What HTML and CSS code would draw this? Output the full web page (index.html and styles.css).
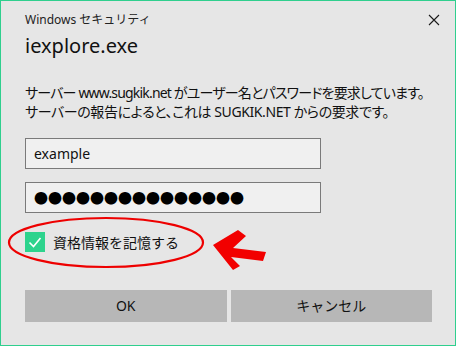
FILE: index.html
```html
<!DOCTYPE html>
<html lang="ja">
<head>
    <meta charset="UTF-8">
    <title>Windows セキュリティ</title>
    <link rel="stylesheet" href="styles.css">
</head>
<body>
    <div class="dialog">
        <div class="titlebar">
            <span class="title">Windows セキュリティ</span>
            <svg class="close" width="12" height="12" viewBox="0 0 12 12">
                <path d="M1 1 L11 11 M11 1 L1 11" stroke="#1a1a1a" stroke-width="1.1" fill="none"/>
            </svg>
        </div>
        <h1 class="app-name">iexplore.exe</h1>
        <p class="message">
            <span class="line tight">サーバー www.sugkik.net がユーザー名とパスワードを要求しています。</span>
            <span class="line">サーバーの報告によると、これは SUGKIK.NET からの要求です。</span>
        </p>

        <div class="field">example</div>
        <div class="field secret">●●●●●●●●●●●●●●●</div>

        <div class="remember">
            <span class="checkbox">
                <svg width="20" height="20" viewBox="0 0 20 20">
                    <path d="M4.5 10.5 L8.5 14.5 L15.5 6" stroke="#fff" stroke-width="1.6" fill="none"/>
                </svg>
            </span>
            <span class="remember-label">資格情報を記憶する</span>
        </div>

        <div class="buttons">
            <div class="btn">OK</div>
            <div class="btn">キャンセル</div>
        </div>

        <!-- annotation drawn over the dialog -->
        <svg class="markup" width="456" height="346" viewBox="0 0 456 346">
            <ellipse cx="106" cy="242.5" rx="97" ry="24.5" stroke="#ee0000" stroke-width="2.2" fill="none"/>
            <polygon points="213,245 238,230 246,236 233,248 266,252 263,261 231,257 240,266 233,270" fill="#f20000"/>
        </svg>
    </div>
</body>
</html>
```

FILE: styles.css
```css
body {
    margin: 0;
    font-family: "Noto Sans", "Noto Sans CJK JP", sans-serif;
    color: #111;
}
.dialog {
    position: relative;
    width: 456px;
    height: 346px;
    box-sizing: border-box;
    border: 1px solid #2fcf8e;
    background-color: #e6e6e6;
    padding: 0 23px 0 24px;
}
.titlebar {
    display: flex;
    justify-content: space-between;
    align-items: center;
    height: 20px;
    padding-top: 8px;
    margin-right: -8px;
}
.title {
    font-size: 12px;
    color: #222;
}
.close {
    margin-top: 1px;
}
.app-name {
    margin: 3px 0 0;
    font-size: 20px;
    font-weight: normal;
    line-height: 28px;
}
.message {
    margin: 23px 0 0;
    font-size: 14px;
    line-height: 19px;
    white-space: nowrap;
    font-feature-settings: "palt";
}
.message .line {
    display: block;
    letter-spacing: -0.4px;
}
.message .line.tight {
    letter-spacing: -0.82px;
}
.field {
    width: 296px;
    height: 31px;
    box-sizing: border-box;
    margin-top: 17px;
    border: 1px solid #7a7a7a;
    background-color: #f0f0f0;
    padding-left: 8px;
    font-size: 14px;
    line-height: 29px;
}
.field.secret {
    margin-top: 13px;
    font-family: "Noto Sans CJK JP", sans-serif;
    color: #000;
}
.remember {
    display: flex;
    align-items: center;
    margin-top: 19px;
    height: 20px;
}
.checkbox {
    width: 20px;
    height: 20px;
    background-color: #2dd38d;
}
.checkbox svg {
    display: block;
}
.remember-label {
    margin-left: 8px;
    font-size: 14px;
}
.buttons {
    display: flex;
    gap: 4px;
    margin-top: 38px;
}
.btn {
    flex: 1;
    height: 32px;
    line-height: 32px;
    text-align: center;
    background-color: #b7b7b7;
    font-size: 14px;
}
.markup {
    position: absolute;
    left: -1px;
    top: -1px;
    pointer-events: none;
}
```
